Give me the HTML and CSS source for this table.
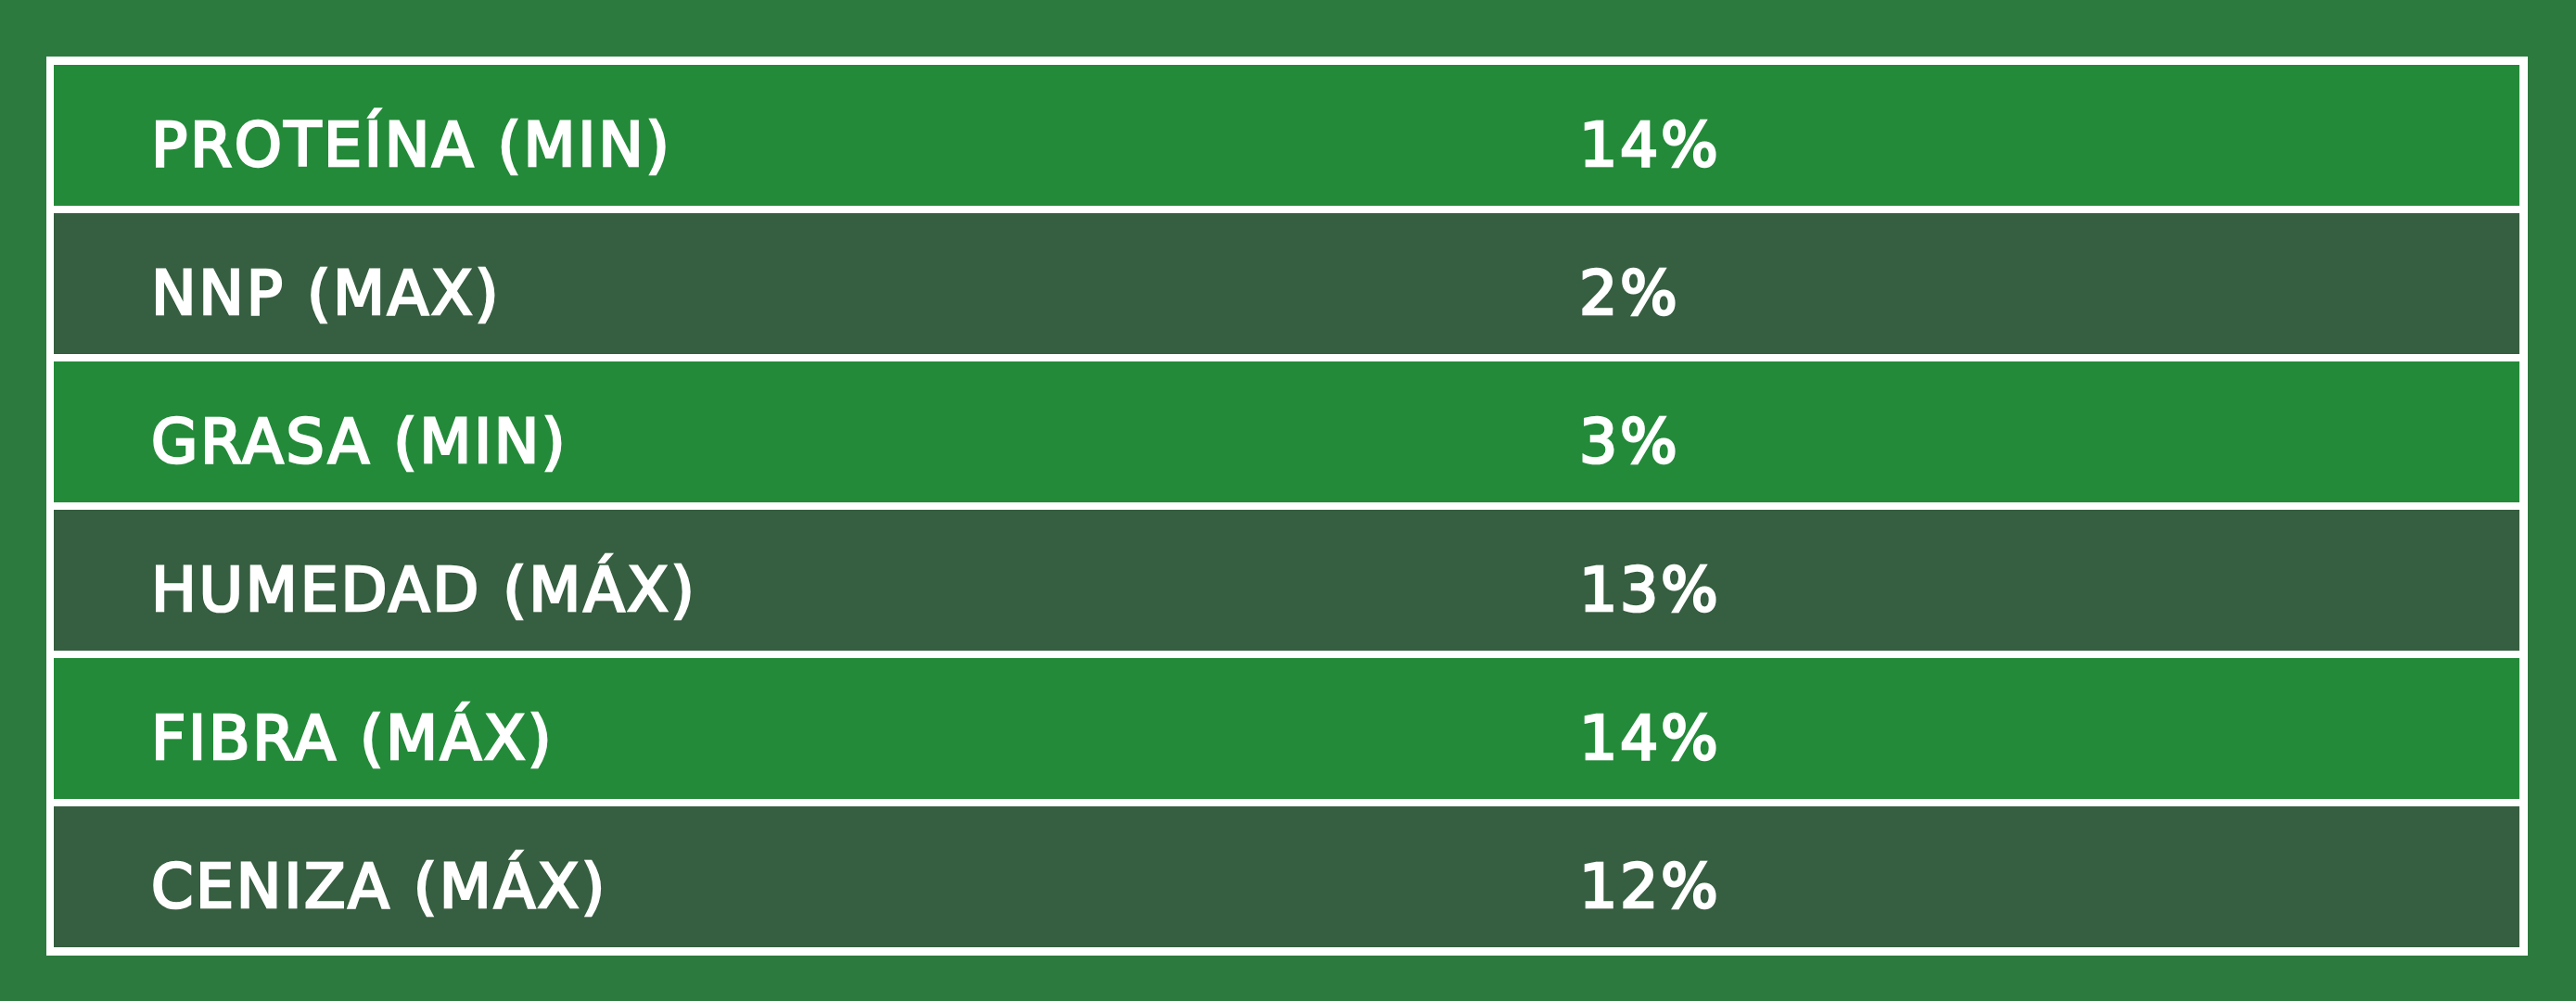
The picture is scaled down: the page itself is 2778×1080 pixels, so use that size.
FILE: index.html
```html
<!DOCTYPE html>
<html lang="es">
<head>
<meta charset="utf-8">
<title>Análisis garantizado</title>
<link rel="stylesheet" href="styles.css">
</head>
<body>
<div class="page">
  <div class="table">
    <div class="row row-light"><span class="label">PROTEÍNA (MIN)</span><span class="value">14%</span></div>
    <div class="row row-dark"><span class="label">NNP (MAX)</span><span class="value">2%</span></div>
    <div class="row row-light"><span class="label">GRASA (MIN)</span><span class="value">3%</span></div>
    <div class="row row-dark"><span class="label">HUMEDAD (MÁX)</span><span class="value">13%</span></div>
    <div class="row row-light"><span class="label">FIBRA (MÁX)</span><span class="value">14%</span></div>
    <div class="row row-dark"><span class="label">CENIZA (MÁX)</span><span class="value">12%</span></div>
  </div>
</div>
</body>
</html>
```

FILE: styles.css
```css
html, body {
  margin: 0;
  padding: 0;
}
body {
  background: #2c7a3e;
  width: 2778px;
  height: 1080px;
  overflow: hidden;
  font-family: "DejaVu Sans", "Open Sans", sans-serif;
}
.page {
  padding: 61px 0 0 50px;
}
.table {
  box-sizing: border-box;
  width: 2676px;
  background: #ffffff;
  border: 9px solid #ffffff;
  border-left-width: 8px;
  display: flex;
  flex-direction: column;
  gap: 8px;
}
.row {
  box-sizing: border-box;
  height: 152px;
  display: grid;
  grid-template-columns: 1540px 1fr;
  align-items: center;
  padding: 20px 0 0 104px;
  color: #ffffff;
  font-size: 65px;
  font-weight: 400;
  line-height: 1;
  letter-spacing: 2.7px;
  -webkit-text-stroke: 2.7px #ffffff;
  white-space: nowrap;
}
.label {
  padding-left: 1px;
}
.value {
  padding-left: 1px;
}
.row-light {
  background: #238a39;
}
.row-dark {
  background: #365e40;
}
```
